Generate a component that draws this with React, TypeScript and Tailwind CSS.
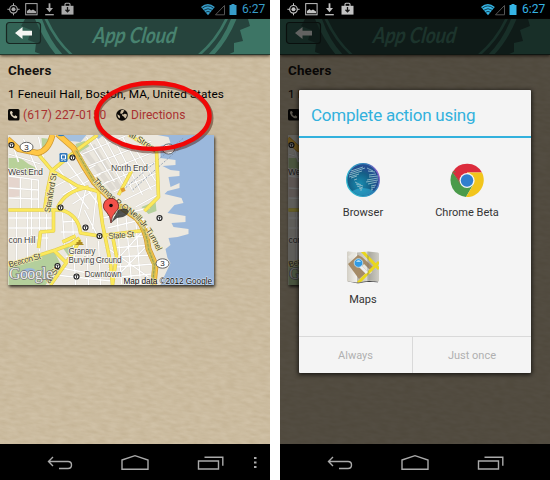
import React from "react";

const roboto = "font-['Roboto','Liberation_Sans',sans-serif]";

function StatusBar({ bright }: { bright?: boolean }) {
  const blue = bright ? "#35b4e4" : "#379dc9";
  const gray = bright ? "#c3c3c3" : "#aaaaaa";
  return (
    <div className="flex h-[19px] shrink-0 items-center bg-black pl-[7px]">
      <svg width="68" height="15" viewBox="7 2 68 15" fill="none" stroke={gray}>
        <circle cx="13.5" cy="9.3" r="3.8" strokeWidth="1.2" />
        <circle cx="13.5" cy="9.3" r="2" fill={gray} stroke="none" />
        <path d="M13.5 3.2v2.3M13.5 13v2.3M7.4 9.3h2.3M17.3 9.3h2.3" />
        <rect x="25.7" y="3.6" width="11.4" height="11.2" />
        <path d="M27 13.2V11l2.5-2 1.5 1.4 2-1 3 2v1.8z" fill={gray} stroke="none" />
        <path d="M49.5 3.3v7" strokeWidth="1.8" />
        <path d="M46 8h7l-3.5 4.2z" fill={gray} stroke="none" />
        <path d="M45.2 14.7h8.6" strokeWidth="1.3" />
        <path d="M61.5 5.8h12v8.8h-12z" fill={gray} stroke="none" />
        <path d="M65 6V4.2q0-1 1-1h3q1 0 1 1V6" strokeWidth="1.1" />
        <path d="M67.5 7v4.2m-2-1.5 2 2.2 2-2.2" stroke="#161616" strokeWidth="1.3" />
      </svg>
      <svg className="ml-[126px]" width="37" height="15" viewBox="201 2 37 15" fill="none">
        <path d="M201 7q6.8-6 13.8 0L208 15.3z" fill={blue} />
        <path d="M202.3 8.2q5.6-4.5 11.2 0M204 10.2q4-3 8 0M205.8 12.2q2.2-1.5 4.4 0" stroke="#071b24" strokeWidth=".75" />
        <path d="M215.5 14.8h9V5.5z" stroke="#555" strokeWidth="1" />
        <path d="M229.5 5h2V4h3v1h2v10h-7z" fill={blue} />
      </svg>
      <span
        className={`ml-[4px] text-[12px] leading-[19px] ${bright ? "text-[#35b4e4]" : "text-[#379dc9]"}`}
      >
        6:27
      </span>
    </div>
  );
}

function Header() {
  return (
    <div className="relative z-10 h-[36px] shrink-0 shadow-[0_1px_3px_rgba(40,25,10,.8)]">
      <svg className="block" width="270" height="36" viewBox="0 19 270 36">
        <rect y="19" width="270" height="36" fill="#3d7565" />
        <path d="M25 19L21 26 31 30 28 40 36 43 35 52 43 55H227L234 52V43L243 41 240 30 250 26 248 19z" fill="#26443d" />
        <path d="M35 19Q43 39 56 55H63Q49 40 42 19zM44.500 19Q54 40 70 55H73.500Q57 40 47.500 19z" fill="#3d7565" />
        <path d="M225 19Q215 40 197 55H201Q218 40 228 19zM231 19Q223 40 208 55H214Q228 40 236.500 19z" fill="#3d7565" />
        <text
          x="93"
          y="43"
          textLength="83"
          lengthAdjust="spacingAndGlyphs"
          transform="translate(5.500 0) skewX(-8)"
          fill="#48826f"
          className="font-['Lato',sans-serif] text-[22px] font-bold italic"
        >
          App Cloud
        </text>
        <rect x="6.500" y="22.500" width="34" height="21" rx="3" fill="#26483f" fillOpacity=".4" stroke="#182722" strokeWidth="1.200" />
        <path d="M15 33l7.500-6v3.700H32v4.800h-9.500V39z" fill="#f5f5f2" />
        <path d="M0 54.500h270" stroke="#24392f" />
      </svg>
    </div>
  );
}

function Texture({ id }: { id: string }) {
  return (
    <svg className="absolute inset-0" width="270" height="389">
      <filter id={id} x="0" y="0" width="100%" height="100%">
        <feTurbulence type="fractalNoise" baseFrequency="0.1 0.32" numOctaves="2" seed="8" />
        <feColorMatrix values="0 0 0 0 .35  0 0 0 0 .25  0 0 0 0 .12  .42 0 0 0 -.1" />
      </filter>
      <g transform="rotate(8)">
        <rect x="-10" y="-60" width="360" height="470" filter={`url(#${id})`} opacity=".85" />
      </g>
    </svg>
  );
}

const blocks = [
  "M56 166L88 209M66 161L100 207M75 157L107 200M44 192L95 165M62 195L100 174M72 204L108 181",
  "M8 176L38 180V210M8 188L38 190M20 177V208M8 198L38 199M31 179V245",
  "M8 218H53M8 228H52M8 238H48M16 211V263M27 211V257M39 211V251M46 214V250",
  "M62 213L64 245M72 215L73 242M84 210L97 236M62 222L78 221M60 232L82 232M86 187L78 218M96 192L92 229",
  "M86 137L114 182M94 135L124 187M103 136L133 192M112 136L142 195M122 137L151 190M132 145L155 181",
  "M82 154L125 136M88 166L151 141M93 176L156 151M105 183L156 162M113 192L156 173M124 200L157 184M135 207L157 195",
  "M102 218L149 208M107 228L144 219M111 239L147 236M111 248L151 245M114 257L152 255M116 267L153 264M119 277L151 274",
  "M116 205L121 284M125 211L131 282M135 217L140 284M108 269L147 226M114 279L152 240M104 246L148 277",
  "M65 256L110 264M61 268L109 277M73 242L75 285M86 238L88 285M98 241L100 285M55 275L111 281",
  "M8 154L40 164M10 138L18 162M23 139L37 171M38 137L43 158M62 140L83 156",
];

function Station({ x, y }: { x: number; y: number }) {
  return (
    <g>
      <circle cx={x} cy={y} r="2.500" fill="#fff" stroke="#222" strokeWidth="1.200" />
      <path d={`M${x - 1.2} ${y - 0.8}h2.4M${x} ${y - 0.8}v2.500`} stroke="#222" strokeWidth=".9" />
    </g>
  );
}

function Shield({ x, y }: { x: number; y: number }) {
  return (
    <g>
      <ellipse cx={x} cy={y} rx="6.500" ry="4.700" fill="#fff" stroke="#555" strokeWidth=".9" />
      <text x={x} y={y + 2.8} textAnchor="middle" fill="#222" fontSize="8">3</text>
    </g>
  );
}

function CityMap({ id }: { id: string }) {
  return (
    <svg
      className="ml-[7.5px] mt-[11px] block shadow-[1px_2px_3px_rgba(0,0,0,.75)]"
      width="206.500"
      height="150"
      viewBox="7.5 135 206.5 150"
      fontFamily="'Liberation Sans', sans-serif"
    >
      <rect x="7" y="135" width="208" height="150" fill="#ece8df" />
      <path d="M157 135L168 137 170 143 160 146V158L175 160V165L162 166 170 170 179 171V176L168 177 170 187 179 183V188L167 191 164 194 181 198 183 203 174 205 167 213 185 216V222L171 223 173 227 188 229V234L177 237 168 238 170 245 165 249 167 258 170 263 163 278 160 285H215V135z" fill="#9bb8dc" />
      <path d="M58 135H86L80 142 70 141zM92 135H103L98 139z" fill="#a5c0de" />
      <path d="M8 158L20 158 28 164 36 168 30 176 18 172 8 168zM41 138L50 139 48 148 42 151zM75 144L84 141 89 146 78 153z" fill="#b8d199" />
      <path d="M8 266L42 253 54 252 60 264 45 285H8zM141 207L155 201 156 211 148 214zM108 207L118 208 119 217 107 217zM61 246L76 243 68 256z" fill="#b4cf9c" />
      <path d="M22 270q8-4 13 0l-4 5-12 2z" fill="#99b8dc" />
      <path d="M8 177H19V196L8 198z" fill="#e5d5cd" />
      <path d="M83 150L113 190M92 145L120 190" stroke="#dedad2" strokeWidth="5" />
      <g fill="none" stroke="#d6d2ca" strokeWidth="1.900">
        {blocks.map((d) => <path key={d} d={d} />)}
      </g>
      <g fill="none" stroke="#fff" strokeWidth="1.300">
        {blocks.map((d) => <path key={d} d={d} />)}
      </g>
      <path d="M120 192L183 138M132 190L193 136" fill="none" stroke="#8494a8" strokeWidth=".8" strokeDasharray="2 1.500" />
      <g fill="none" stroke="#dfca50" strokeWidth="3.600" strokeLinejoin="round">
        <path d="M97 135L75 151 51 171 47 190 44 210M35 151L52 171 77 186 104 193M88 187Q64 191 57 208M8 210H61Q78 215 80 233L99 236M53 211V231L40 232 38 248M8 265L55 250 79 241 65 264 50 285M53 250L66 263M79 238L68 246M62 242L75 236" />
        <path d="M97 187L102 224 110 263 112 285M97 236L122 233 147 230M131 171L118 195M156 151L158 197 144 211M128 135L156 151M112 236L116 256 112 285" />
      </g>
      <g fill="none" stroke="#fbe95c" strokeWidth="2.500" strokeLinejoin="round">
        <path d="M97 135L75 151 51 171 47 190 44 210M35 151L52 171 77 186 104 193M88 187Q64 191 57 208M8 210H61Q78 215 80 233L99 236M53 211V231L40 232 38 248M8 265L55 250 79 241 65 264 50 285M53 250L66 263M79 238L68 246M62 242L75 236" />
        <path d="M97 187L102 224 110 263 112 285M97 236L122 233 147 230M131 171L118 195M156 151L158 197 144 211M128 135L156 151M112 236L116 256 112 285" />
      </g>
      <g fill="none" strokeLinejoin="round">
        <path d="M7 139L18 149 37 153Q48 151 52 135M57 134L73 148 83 166 94 183 113 202 136 218Q146 229 148 249L155 265 153 285" stroke="#ce9833" strokeWidth="6" />
        <path d="M7 139L18 149 37 153Q48 151 52 135M57 134L73 148 83 166 94 183 113 202 136 218Q146 229 148 249L155 265 153 285" stroke="#ffc746" strokeWidth="4.500" />
        <path d="M75 150L95 184 114 202 136 218Q146 229 148 249L154 265 152 285" stroke="#d5bd54" strokeWidth="4" />
        <path d="M76 151L95 184 114 202 136 218Q146 229 148 249L154 265 152 285" stroke="#7c9955" strokeWidth=".8" strokeDasharray="3 1" />
      </g>
      <path id={`${id}-tunnel`} d="M92 181Q111 203 131 215Q146 227 158 254" fill="none" />
      <g fill="#494538" stroke="#f6eeb4" strokeWidth="1.300" paintOrder="stroke" fontSize="8.500">
        <text textLength="97"><textPath href={`#${id}-tunnel`}>Thomas P. O&#39;Neill Jr. Tunnel</textPath></text>
        <text transform="translate(49.500 213) rotate(-80)" textLength="40">Staniford St</text>
        <text transform="translate(9 267.500) rotate(-16)" textLength="33">Beacon St</text>
        <text transform="translate(108 239) rotate(-5)" textLength="26">State St</text>
        <text transform="translate(128 136) rotate(32)" textLength="31">al Street</text>
        <text transform="translate(49 284) rotate(-57)">ar St</text>
      </g>
      <g fill="#444" stroke="#f8f5ef" strokeWidth="1.500" paintOrder="stroke" fontSize="8.800">
        <text x="7.500" y="175" textLength="35">West End</text>
        <text x="110.500" y="171" textLength="37">North End</text>
        <text x="8" y="243" textLength="27">con Hill</text>
        <text x="68" y="254" textLength="27" fontSize="8.300">Granary</text>
        <text x="68" y="262.500" textLength="53" fontSize="8.300">Burying Ground</text>
        <text x="84" y="277" textLength="37" fontSize="8.300">Downtown</text>
      </g>
      <Station x={11} y={145} /><Station x={72} y={157.5} /><Station x={60} y={207.5} />
      <Station x={85} y={227.5} /><Station x={99} y={236} /><Station x={57} y={266} />
      <Station x={76} y={276.5} /><Station x={159} y={218} />
      <Shield x={26} y={147} /><Shield x={162} y={263.5} />
      <rect x="59" y="153" width="8" height="9" rx="1.200" fill="#347bbd" />
      <path d="M61 155h4v4h-4zM61 161l1-1M65 161l-1-1" fill="none" stroke="white" />
      <path d="M57 135a4 2.500 0 0 0 7 0z" fill="#347bbd" />
      <path d="M75 245h8v-1h-1v-2h-2v-2h-2v2h-2v2h-1z" fill="#ac8b23" />
      <rect x="120.500" y="188" width="4" height="4" fill="#df9b2d" transform="rotate(-25 122 190)" />
      <ellipse cx="168" cy="149" rx="6" ry="5" fill="#fff" stroke="#555" strokeWidth=".9" />
      <path d="M110.500 223l7-13q7-3 10 0 2 4-5 7l-6 1z" fill="#282b2b" fillOpacity=".8" />
      <path d="M110.500 223q-.4-7-4.500-11c-3-3-3.500-5-2.800-8 1-3.500 4-5.700 7.300-5.700s6.300 2.200 7.300 5.700c.7 3 .2 5-2.800 8q-4.100 4-4.500 11z" fill="#f35249" stroke="#641d1a" strokeWidth=".8" />
      <circle cx="110.500" cy="205.500" r="1.800" fill="#130b0b" />
      <text x="8.500" y="278.500" textLength="44" fontFamily="'Liberation Serif', serif" fontSize="16" fill="#eee" stroke="#777" strokeWidth="1.300" paintOrder="stroke">Google</text>
      <text x="123" y="283.500" textLength="88.500" fontSize="8.300" fill="#111" stroke="#fff" strokeOpacity=".65" strokeWidth="1" paintOrder="stroke">Map data ©2012 Google</text>
    </svg>
  );
}

function Place({ id }: { id: string }) {
  return (
    <div className="relative flex-1 overflow-hidden bg-[#d0c1a6]">
      <Texture id={id} />
      <div className="relative text-black">
        <h1 className="h-[28px] pl-[8px] pt-[7px] text-[13.4px] font-bold leading-[18px] tracking-[0.15px] text-[#17130f]">Cheers</h1>
        <p className="h-[20px] whitespace-nowrap pl-[8px] pt-[2px] text-[11.8px] leading-[18px] tracking-[0.1px]">
          1 Feneuil Hall, Boston, MA, United States
        </p>
        <div className="flex h-[21px] items-center pl-[7.5px] pt-[2px] text-[12px] leading-[18px] text-[#a93131]">
          <svg width="12" height="12" viewBox="0 0 12 12">
            <rect width="11.500" height="11.500" rx="1.500" fill="#0b0907" />
            <path d="M2.500 2.300l1.300-.4 1.200 2-1 .9q.7 1.600 2.300 2.500l1-1 2 1.200-.3 1.500q-1.500.7-3-.1Q2.500 7 2 4.300 1.900 3 2.500 2.300z" fill="#ddd0ba" />
          </svg>
          <span className="ml-[3.500px] w-[92.5px] whitespace-nowrap pt-[1px] tracking-[0.1px]">(617) 227-0150</span>
          <svg width="12" height="12" viewBox="0 0 12 12">
            <circle cx="6" cy="6" r="5.800" fill="#0b0907" />
            <path d="M5.500.9l2 .1 1 1.100-1 .5-.4 1.200L5.700 5l1.800.6 1-.9 1.700.2.800 1.100-.8 2.400-1.200 1-1-1.600-1.700-1-.6-2-1.500-.2.200-1.700zM1.300 5.200l2.200 1.400.7 1.500-.8 1.300L2 8z" fill="#cdbda1" />
          </svg>
          <span className="ml-[3.500px] pt-[1px] tracking-[0.05px]">Directions</span>
        </div>
        <CityMap id={id} />
      </div>
    </div>
  );
}

function NavBar({ menu }: { menu?: boolean }) {
  return (
    <div className="relative z-30 h-[36px] shrink-0 bg-black">
      <svg className="block" width="270" height="36" viewBox="0 444 270 36" fill="none" stroke="#aaa" strokeWidth="1.400">
        <path d="M53 457l-4.500 4.500 4.500 4.500M49 461.500h19q3.500 0 3.500 3.500t-3.500 3.500h-9" />
        <path d="M122 460l13-4.300 13 4.300v9.200h-26z" />
        <path d="M198.500 461h20v8h-20zM204.500 457.300h18.300v8.500" />
        {menu && <path d="M254 458h2.500M254 462.500h2.500M254 467h2.500" strokeWidth="2.200" />}
      </svg>
    </div>
  );
}

function BrowserIcon() {
  return (
    <svg width="36" height="36" viewBox="0 0 36 36">
      <defs>
        <radialGradient id="globe" cx=".4" cy=".62"><stop stopColor="#178db1" /><stop offset=".7" stopColor="#155f86" /><stop offset="1" stopColor="#244f91" /></radialGradient>
        <linearGradient id="globeEdge" x1="0" x2="1" y1=".5" y2=".1"><stop stopColor="#30b8cf" /><stop offset=".7" stopColor="#307bb5" /><stop offset="1" stopColor="#b453d3" /></linearGradient>
      </defs>
      <circle cx="18" cy="18" r="16.300" fill="url(#globe)" stroke="url(#globeEdge)" strokeWidth="1.300" />
      <path d="M7 29q11-6 22 0-11 9-22 0z" fill="#35bee5" fillOpacity=".5" />
      <g stroke="#8dbbc9" strokeWidth=".9" fill="none">
        <path d="M6 9l12-4M5 11l15-5M4 13l13-4M4 15l10-3M6 16l6-2M9 18l3-1M10 20l6 3M11 22l7 2M12 24l6 2M14 26l3 1M15 28h2" />
        <path d="M22 6l6 3M23 9l7 1M24 13l7-1M24 15l9-1M22 18l11-2M21 20l12-2M23 22l9-2M26 24l5-1M26 26l4-1M26 28l2-1" />
      </g>
    </svg>
  );
}

function ChromeIcon() {
  return (
    <svg width="36" height="36" viewBox="0 0 36 36">
      <path d="M18 18L3.500 10A17 17 0 0 1 33 10.500H18z" fill="#dc2c3d" />
      <path d="M3.500 10A17 17 0 0 0 17 35L24.500 22 18 18 11.500 22z" fill="#4b9b4b" />
      <path d="M33 10.500A17 17 0 0 1 17 35L25 21.500Q27 14 18 10.500z" fill="#f2c51c" />
      <path d="M3.500 10L11 22 18 18z" fill="#dc2c3d" />
      <path d="M3.500 10L11.500 22.500 15 20 5.500 9z" fill="#4b9b4b" />
      <path d="M3.500 10L11 20 18 12z" fill="#dc2c3d" />
      <circle cx="18" cy="18.500" r="7.500" fill="#f5f5f5" />
      <circle cx="18" cy="18.500" r="6.200" fill="#307fce" />
    </svg>
  );
}

function MapsIcon() {
  return (
    <svg width="36" height="36" viewBox="0 0 36 36">
      <defs>
        <linearGradient id="fold"><stop stopColor="#ccc8bd" /><stop offset=".32" stopColor="#f2f0eb" /><stop offset=".34" stopColor="#bcb9af" /><stop offset=".64" stopColor="#deddd5" /><stop offset=".67" stopColor="#aaa99f" /><stop offset="1" stopColor="#d6d4cd" /></linearGradient>
        <clipPath id="mapSheet"><path d="M2 3q1-1 2-.5l8 1 11-1 10 1 1 1v28l-10-1-11 2-11-1z" /></clipPath>
      </defs>
      <path d="M3 32l10 2 11-2 9 1" stroke="#777" />
      <g clipPath="url(#mapSheet)">
        <rect width="36" height="36" fill="url(#fold)" />
        <path d="M3 15L13 6 17 8 28 18 14 30z" fill="#a58b67" />
        <path d="M18 16L26 24M4 9L11 3" stroke="#e7e6df" strokeWidth="3" />
        <path d="M13 34L34 13M17 2L34 20" stroke="#e9d71b" strokeWidth="3" fill="none" />
        <path d="M23 2v31" stroke="#777" strokeOpacity=".3" strokeWidth="2" />
      </g>
      <path d="M15 17l7 7" stroke="#eee" strokeWidth="3" />
      <circle cx="13.500" cy="14" r="4.300" fill="#319be4" stroke="#c6e5f3" strokeWidth=".8" />
      <path d="M11 13q2.500-4 5 0z" fill="#a9dcf6" />
    </svg>
  );
}

function Choice({ icon, label }: { icon: React.ReactNode; label: string }) {
  return (
    <div className="flex h-[87px] w-[104px] flex-col items-center">
      {icon}
      <span className="mt-[6px] whitespace-nowrap text-[11px] leading-[18px] text-[#333]">{label}</span>
    </div>
  );
}

function Chooser() {
  return (
    <div className="absolute left-[19px] top-[90px] z-20 flex h-[283px] w-[232px] flex-col rounded-[1px] bg-[#f4f4f4] shadow-[0_1px_4px_1px_rgba(0,0,0,.65)]">
      <div className="h-[49px] border-b-2 border-[#32b1dd] pl-[12px] pt-[12.5px] text-[17px] leading-[24px] text-[#32b1dd]">
        <span className="whitespace-nowrap tracking-[-0.25px]">Complete action using</span>
      </div>
      <div className="flex flex-1 flex-wrap content-start pl-[12px] pt-[24px]">
        <Choice icon={<BrowserIcon />} label="Browser" />
        <Choice icon={<ChromeIcon />} label="Chrome Beta" />
        <Choice icon={<MapsIcon />} label="Maps" />
      </div>
      <div className="flex h-[37.5px] border-t border-[#d9d9d9] text-[11px] leading-[38px] text-[#b0b0b0]">
        <div className="w-[114px] border-r border-[#d9d9d9] text-center">Always</div>
        <div className="flex-1 text-center">Just once</div>
      </div>
    </div>
  );
}

export default function App() {
  return (
    <main className={`flex h-[480px] w-[550px] gap-[10px] overflow-hidden bg-white ${roboto}`}>
      <section className="relative flex w-[270px] flex-col overflow-hidden">
        <StatusBar />
        <Header />
        <Place id="left" />
        <NavBar menu />
        <svg className="absolute left-[90px] top-[76px] z-20" width="128" height="82" viewBox="90 76 128 82">
          <ellipse cx="154" cy="118" rx="57" ry="33" fill="none" stroke="#492015" strokeOpacity=".5" strokeWidth="5" />
          <ellipse cx="153" cy="116" rx="56.500" ry="33" fill="none" stroke="#f10707" strokeWidth="4.500" />
        </svg>
      </section>
      <section className="relative flex w-[270px] flex-col overflow-hidden">
        <StatusBar bright />
        <Header />
        <Place id="right" />
        <NavBar />
        <div className="absolute inset-x-0 bottom-[36px] top-[19px] z-10 bg-black/60" />
        <Chooser />
      </section>
    </main>
  );
}
